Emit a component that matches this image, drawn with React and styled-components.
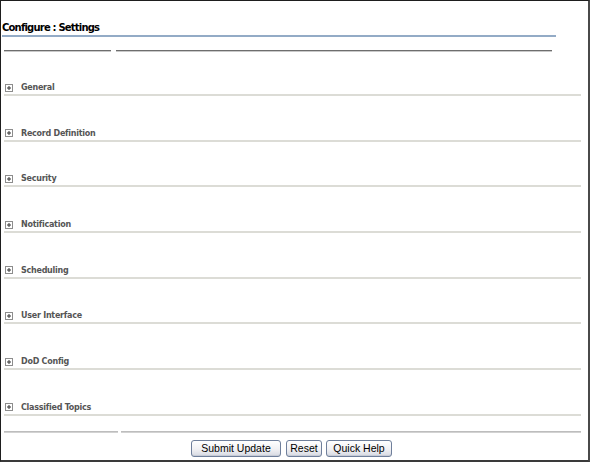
import React from 'react'
import styled, { createGlobalStyle } from 'styled-components'

const GlobalStyle = createGlobalStyle`
  html, body {
    margin: 0;
    padding: 0;
    background: #ffffff;
  }
`

const Frame = styled.div`
  box-sizing: border-box;
  width: 590px;
  height: 462px;
  border-top: 1px solid #1e1e1e;
  border-left: 1px solid #1e1e1e;
  border-right: 2px solid #4a4a4a;
  border-bottom: 2px solid #3a3a3a;
  background: #fff;
  font-family: Tahoma, "DejaVu Sans", sans-serif;
  overflow: hidden;
`

const Title = styled.div`
  margin: 20px 0 0 1px;
  width: 554px;
  font-family: "DejaVu Sans", sans-serif;
  font-weight: bold;
  font-size: 10px;
  letter-spacing: -0.8px;
  color: #000;
  line-height: 13px;
  padding-bottom: 1px;
  border-bottom: 2px solid #93abc6;
`

const RuleRow = styled.div`
  display: flex;
  gap: ${p => p.gap}px;
  margin: ${p => p.top}px 0 0 3px;
  width: ${p => p.width}px;
`

const Rule = styled.div`
  height: 0;
  flex: ${p => (p.grow ? 1 : `0 0 ${p.w}px`)};
  border-top: 1px solid ${p => p.dark};
  border-bottom: 1px solid ${p => p.light};
`

const Sections = styled.div`
  display: grid;
  grid-auto-rows: 45.7px;
  margin: 29px 0 0 3px;
  width: 577px;
`

const Section = styled.div`
  display: flex;
  flex-direction: column;
`

const Header = styled.div`
  display: flex;
  align-items: center;
  height: 13px;
  border-bottom: 2px solid #dcdcd6;
`

const Toggle = styled.svg`
  flex: 0 0 auto;
  margin: 0 8px 0 1px;
`

const Label = styled.span`
  font-family: "DejaVu Sans", sans-serif;
  font-weight: bold;
  font-size: 8px;
  color: #555;
  letter-spacing: -0.25px;
`

const Buttons = styled.div`
  display: flex;
  justify-content: center;
  margin-top: 7px;
  padding-right: 6px;
`

const Button = styled.button`
  box-sizing: border-box;
  height: 17px;
  width: ${p => p.w}px;
  margin-left: ${p => p.gap || 0}px;
  padding: 0;
  font-family: Arial, "Liberation Sans", sans-serif;
  font-size: 10.5px;
  color: #000;
  border: 1px solid #6f7f9b;
  border-radius: 3px;
  background: linear-gradient(#ffffff 0%, #f1f1f4 55%, #d6d9e2 100%);
  box-shadow: inset 0 -1px 0 #c7cbd6;
  line-height: 14px;
`

const PlusIcon = () => (
  <Toggle width="8" height="8" viewBox="0 0 8 8">
    <rect x="0.5" y="0.5" width="7" height="7" fill="#fff" stroke="#8d8d8d" />
    <path d="M2 4h4M4 2v4" stroke="#333" strokeWidth="1" />
  </Toggle>
)

const sections = [
  'General',
  'Record Definition',
  'Security',
  'Notification',
  'Scheduling',
  'User Interface',
  'DoD Config',
  'Classified Topics',
]

export default function App() {
  return (
    <Frame>
      <GlobalStyle />
      <Title>Configure : Settings</Title>
      <RuleRow top={13} gap={5} width={548}>
        <Rule w={107} dark="#6e6e6e" light="#c9c9c9" />
        <Rule grow dark="#6e6e6e" light="#c9c9c9" />
      </RuleRow>
      <Sections>
        {sections.map(name => (
          <Section key={name}>
            <Header>
              <PlusIcon />
              <Label>{name}</Label>
            </Header>
          </Section>
        ))}
      </Sections>
      <RuleRow top={-16} gap={3} width={577}>
        <Rule w={114} dark="#bdbdbd" light="#d2d2d2" />
        <Rule grow dark="#bdbdbd" light="#d2d2d2" />
      </RuleRow>
      <Buttons>
        <Button w={90}>Submit Update</Button>
        <Button w={36} gap={5}>Reset</Button>
        <Button w={66} gap={4}>Quick Help</Button>
      </Buttons>
    </Frame>
  )
}
